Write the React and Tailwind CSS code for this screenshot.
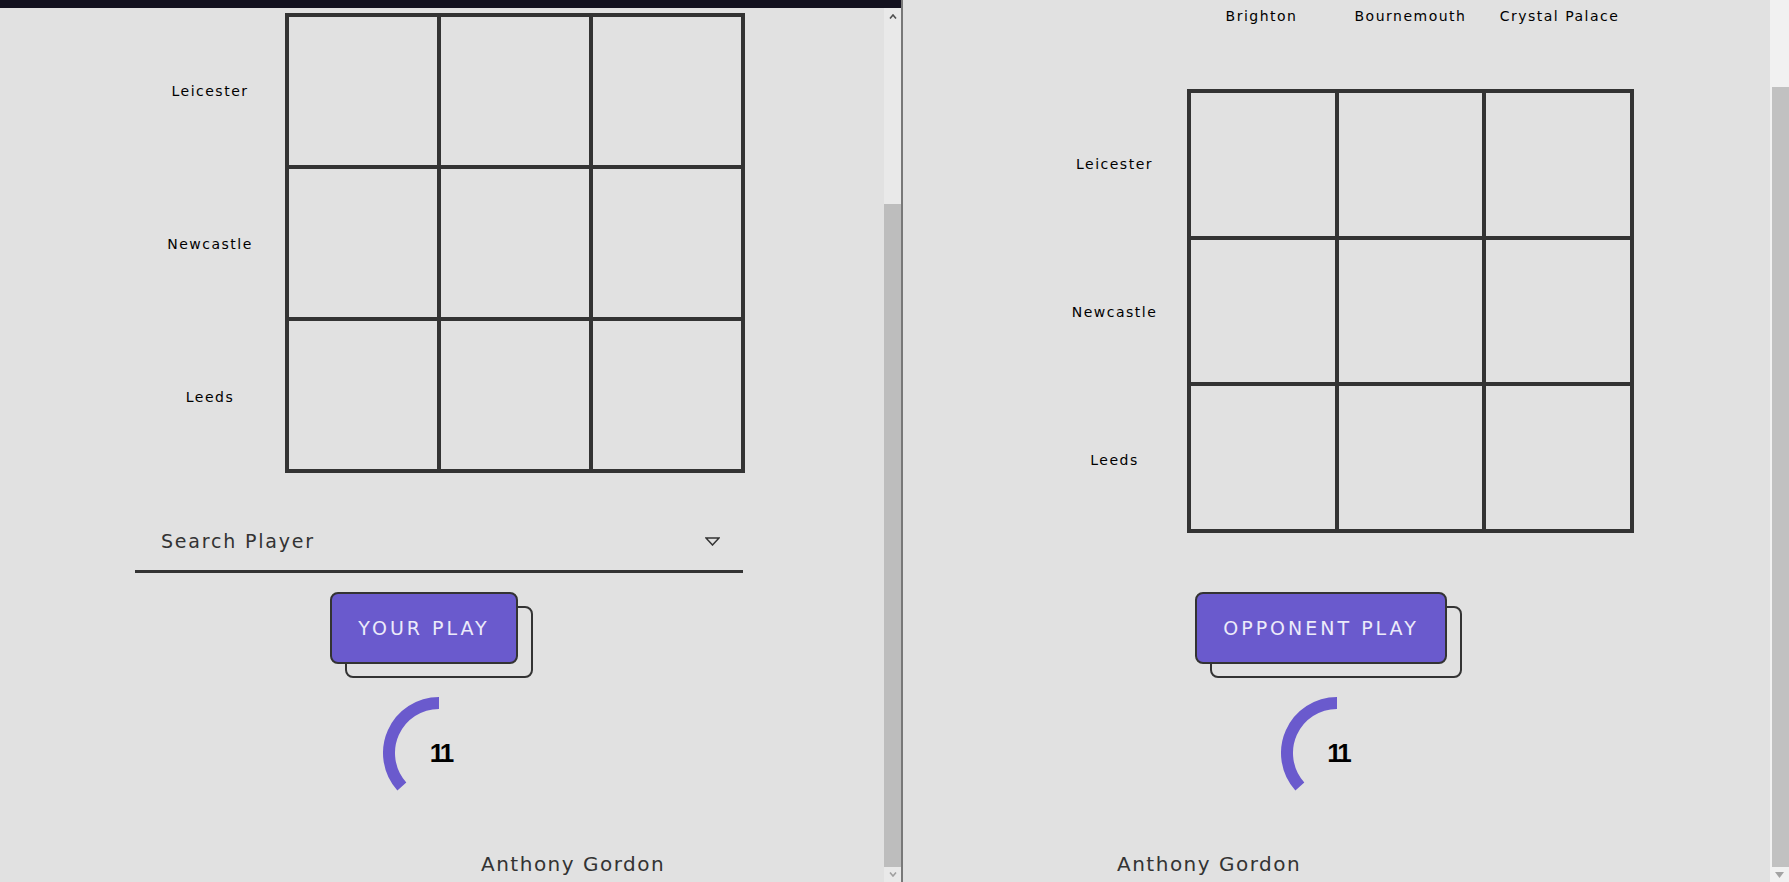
const FONT = "font-['DejaVu_Sans',sans-serif]";

const rows = ['Leicester', 'Newcastle', 'Leeds'];
const cols = ['Brighton', 'Bournemouth', 'Crystal Palace'];

function Board({ size }) {
  return (
    <div
      className={`grid grid-cols-3 grid-rows-3 border-2 border-[#333] ${size}`}
    >
      {Array.from({ length: 9 }).map((_, i) => (
        <div key={i} className="border-2 border-[#333]" />
      ))}
    </div>
  );
}

function RowLabels({ width }) {
  return (
    <div className={`flex flex-col ${width}`}>
      {rows.map((r) => (
        <div
          key={r}
          className="flex flex-1 items-center justify-center pt-[3px] text-[14px] tracking-[1.5px] text-black"
        >
          {r}
        </div>
      ))}
    </div>
  );
}

function PlayButton({ label }) {
  return (
    <div className="relative">
      <div className="absolute left-[15px] top-[14px] h-full w-full rounded-lg border-2 border-[#333]" />
      <button className="relative flex h-[72px] items-center rounded-lg border-2 border-[#333] bg-[#6a5acd] px-[26px] text-[19px] tracking-[3px] text-[#ecebfa]">
        {label}
      </button>
    </div>
  );
}

function Timer({ value }) {
  // 11 of 30 seconds left, drawn counter-clockwise from the top
  return (
    <div className="relative h-[124px] w-[124px]">
      <svg width="124" height="124" viewBox="0 0 124 124">
        <path
          d="M 62 12 A 50 50 0 0 0 24.84 95.46"
          fill="none"
          stroke="#6a5acd"
          strokeWidth="12"
        />
      </svg>
      <span className="absolute inset-0 flex items-center justify-center pl-[3px] font-['Liberation_Sans',sans-serif] text-[26px] font-bold tracking-[-3px] text-black">
        {value}
      </span>
    </div>
  );
}

function Chevron({ up, color }) {
  return (
    <svg width="8" height="5" viewBox="0 0 8 5">
      <polyline
        points={up ? '1,4.5 4,1 7,4.5' : '1,0.5 4,4 7,0.5'}
        fill="none"
        stroke={color}
        strokeWidth="1.6"
      />
    </svg>
  );
}

export default function App() {
  return (
    <div
      className={`flex h-[882px] w-[1789px] overflow-hidden bg-[#e1e1e1] ${FONT}`}
    >
      {/* Left window */}
      <div className="flex w-[901px] flex-col">
        <div className="h-2 bg-[#13111e]" />
        <div className="flex min-h-0 flex-1">
          <main className="min-w-0 flex-1 overflow-hidden">
            <div className="ml-[135px] mt-[5px] flex h-[460px] w-[610px]">
              <RowLabels width="w-[150px]" />
              <Board size="h-[460px] w-[460px]" />
            </div>

            <div className="ml-[135px] mt-[40px] flex h-[60px] w-[608px] items-center justify-between border-b-[3px] border-[#333] pl-[26px] pr-[23px]">
              <span className="text-[19px] tracking-[1.8px] text-[#333]">Search Player</span>
              <svg width="15" height="9" viewBox="0 0 15 9">
                <polygon points="1,1 14,1 7.5,8" fill="none" stroke="#333" strokeWidth="1.5" />
              </svg>
            </div>

            <div className="mt-[19px] flex justify-center pr-[36px]">
              <PlayButton label="YOUR PLAY" />
            </div>

            <div className="mt-[27px] flex justify-center pr-[6px]">
              <Timer value="11" />
            </div>

            <p className="mt-[37px] pl-[481px] text-[20px] leading-[24px] tracking-[1.5px] text-[#333]">
              Anthony Gordon
            </p>
          </main>

          {/* scrollbar */}
          <div className="flex w-[17px] flex-col bg-[#e9e9e9]">
            <div className="flex h-[17px] items-center justify-center">
              <Chevron up color="#505050" />
            </div>
            <div className="mt-[179px] h-[663px] bg-[#bdbdbd]" />
            <div className="flex flex-1 items-center justify-center">
              <Chevron color="#a0a0a0" />
            </div>
          </div>
        </div>
      </div>

      <div className="w-[2px] bg-[#787878]" />

      {/* Right window */}
      <div className="flex min-w-0 flex-1">
        <main className="min-w-0 flex-1 overflow-hidden">
          <div className="ml-[139px] flex h-[32px] w-[592px]">
            <div className="w-[145px]" />
            <div className="grid w-[447px] grid-cols-3">
              {cols.map((c) => (
                <div
                  key={c}
                  className="flex items-center justify-center whitespace-nowrap text-[14px] tracking-[1.5px] text-black"
                >
                  {c}
                </div>
              ))}
            </div>
          </div>

          <div className="ml-[139px] mt-[57px] flex h-[444px] w-[592px]">
            <RowLabels width="w-[145px]" />
            <Board size="h-[444px] w-[447px]" />
          </div>

          <div className="mt-[59px] flex justify-center pr-[31px]">
            <PlayButton label="OPPONENT PLAY" />
          </div>

          <div className="mt-[27px] flex justify-center">
            <Timer value="11" />
          </div>

          <p className="mt-[37px] pl-[214px] text-[20px] leading-[24px] tracking-[1.5px] text-[#333]">
            Anthony Gordon
          </p>
        </main>

        {/* scrollbar */}
        <div className="flex w-[19px] flex-col bg-[#f1f1f1]">
          <div className="h-[17px]" />
          <div className="ml-[2px] mt-[70px] h-[780px] bg-[#c1c1c1]" />
          <div className="flex flex-1 items-center justify-center">
            <svg width="9" height="6" viewBox="0 0 9 6">
              <polygon points="0,0 9,0 4.5,6" fill="#a3a3a3" />
            </svg>
          </div>
        </div>
      </div>
    </div>
  );
}
